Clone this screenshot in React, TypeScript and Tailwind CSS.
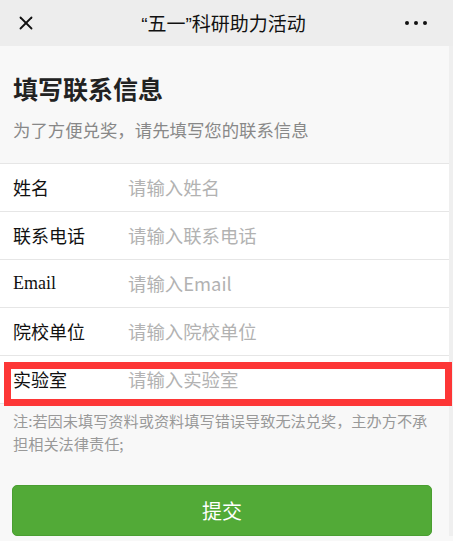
import { X } from "lucide-react";

const fields = [
  { label: "姓名", placeholder: "请输入姓名" },
  { label: "联系电话", placeholder: "请输入联系电话" },
  { label: "Email", placeholder: "请输入Email", serif: true },
  { label: "院校单位", placeholder: "请输入院校单位" },
  { label: "实验室", placeholder: "请输入实验室" },
];

const cjk = "font-['Noto_Sans_CJK_SC',sans-serif]";

export default function App() {
  return (
    <div className={`relative w-[453px] h-[541px] overflow-hidden bg-[#f8f8f8] ${cjk}`}>
      {/* Top bar */}
      <div className="flex items-center h-[46px] bg-[#ededed] relative">
        <div className="w-[52px] flex justify-center">
          <X className="h-[22px] w-[22px] text-[#111]" strokeWidth={2} />
        </div>
        <div className="flex-1 text-center text-[19px] text-[#111] leading-none pr-[6px]">
          <span className="font-['Liberation_Sans',sans-serif]">“</span>五一
          <span className="font-['Liberation_Sans',sans-serif]">”</span>科研助力活动
        </div>
        <div className="w-[52px] flex gap-[5px] items-center pl-[4px]">
          <span className="w-[4px] h-[4px] rounded-full bg-[#111]" />
          <span className="w-[4px] h-[4px] rounded-full bg-[#111]" />
          <span className="w-[4px] h-[4px] rounded-full bg-[#111]" />
        </div>
      </div>

      <div className="flex">
        <div className="flex-1">
          {/* Heading */}
          <div className="px-[13px] pt-[26px]">
            <h1 className="text-[25px] leading-[32px] font-bold text-[#222]">填写联系信息</h1>
            <p className="mt-[14px] text-[17.4px] leading-[24px] text-[#888]">为了方便兑奖，请先填写您的联系信息</p>
          </div>

          {/* Form */}
          <div className="mt-[21px] bg-white border-t border-[#e6e6e6]">
            {fields.map((f) => (
              <div key={f.label} className="flex items-center h-[48px] border-b border-[#e6e6e6] pl-[13px]">
                <span
                  className={`w-[115px] text-[18px] text-[#111] ${
                    f.serif ? "font-['Liberation_Serif',serif]" : ""
                  }`}
                >
                  {f.label}
                </span>
                <input
                  className="flex-1 min-w-0 bg-transparent outline-none text-[18.4px] placeholder:text-[#b2b2b2]"
                  placeholder={f.placeholder}
                />
              </div>
            ))}
          </div>

          {/* Note */}
          <p className="pl-[13px] pr-[18px] pt-[5px] text-[15.2px] leading-[23px] text-[#999]">
            注:若因未填写资料或资料填写错误导致无法兑奖，主办方不承担相关法律责任;
          </p>

          <div className="pt-[30px] pl-[12px]">
            <button className="w-[420px] h-[51px] rounded-[5px] bg-[#52aa37] border border-[#4a9e31] text-white text-[20px]">
              提交
            </button>
          </div>
        </div>
        <div className="w-[4px] bg-[#efefef]" />
      </div>

      {/* Highlight box */}
      <div className="absolute left-[4px] top-[362px] w-[448px] h-[44px] border-[7px] border-[#fd3636]" />
    </div>
  );
}
